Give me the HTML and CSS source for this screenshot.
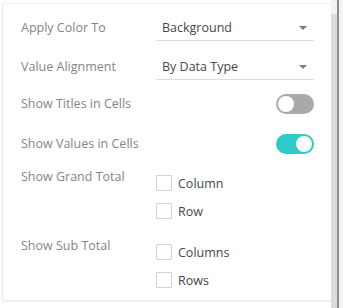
FILE: index.html
```html
<!DOCTYPE html>
<html lang="en">

<head>
  <meta charset="utf-8">
  <title>Pivot Settings</title>
  <link rel="stylesheet" href="styles.css">
</head>

<body>
  <div class="frame">
    <div class="panel">
      <div class="row select-row">
        <span class="label">Apply Color To</span>
        <div class="select">
          <span>Background</span>
          <span class="caret"></span>
        </div>
      </div>

      <div class="row select-row second">
        <span class="label">Value Alignment</span>
        <div class="select">
          <span>By Data Type</span>
          <span class="caret"></span>
        </div>
      </div>

      <div class="row toggle-row first-toggle">
        <span class="label">Show Titles in Cells</span>
        <div class="toggle-cell">
          <span class="toggle"><span class="knob"></span></span>
        </div>
      </div>

      <div class="row toggle-row">
        <span class="label">Show Values in Cells</span>
        <div class="toggle-cell">
          <span class="toggle on"><span class="knob"></span></span>
        </div>
      </div>

      <div class="row check-row grand">
        <span class="label">Show Grand Total</span>
        <div class="checks">
          <label class="check"><span class="box"></span>Column</label>
          <label class="check"><span class="box"></span>Row</label>
        </div>
      </div>

      <div class="row check-row sub">
        <span class="label">Show Sub Total</span>
        <div class="checks">
          <label class="check"><span class="box"></span>Columns</label>
          <label class="check"><span class="box"></span>Rows</label>
        </div>
      </div>
    </div>

    <div class="scrollbar">
      <div class="thumb"></div>
    </div>
    <div class="edge"></div>
    <div class="outside"></div>
  </div>
</body>

</html>
```

FILE: styles.css
```css
body,
html {
  margin: 0;
  padding: 0;
  height: 100%;
  background-color: #ffffff;
  font-family: "Open Sans", "Liberation Sans", sans-serif;
  font-size: 12.5px;
}

.frame {
  display: flex;
  height: 308px;
}

.panel {
  width: 329px;
  margin: 3px 0 0 2px;
  height: 299px;
  border-left: 1px solid #e9e9e9;
  border-top: 1px solid #f1f1f1;
  border-bottom: 2px solid #f0f0f0;
  padding: 11px 0 0 18px;
  box-sizing: border-box;
}

.row {
  display: grid;
  grid-template-columns: 135px 158px;
}

.label {
  color: #858585;
  line-height: 18px;
}

.select-row {
  align-items: center;
}

.select-row.second {
  margin-top: 13px;
}

.select {
  display: flex;
  align-items: center;
  justify-content: space-between;
  height: 25px;
  padding: 0 7px 0 6px;
  border-bottom: 1px solid #dedede;
  color: #474747;
}

.caret {
  width: 0;
  height: 0;
  border-left: 4px solid transparent;
  border-right: 4px solid transparent;
  border-top: 4px solid #7a7a7a;
}

.toggle-row {
  align-items: center;
  height: 30px;
  margin-top: 10px;
}

.toggle-row.first-toggle {
  margin-top: 9px;
}

.toggle-cell {
  display: flex;
  justify-content: flex-end;
}

.toggle {
  display: flex;
  align-items: center;
  width: 38px;
  height: 20px;
  padding: 0 2px;
  box-sizing: border-box;
  border-radius: 10px;
  background-color: #a9a9a9;
}

.toggle.on {
  justify-content: flex-end;
  background-color: #2ecac7;
}

.knob {
  width: 16px;
  height: 16px;
  border-radius: 50%;
  background-color: #ffffff;
}

.check-row {
  align-items: start;
}

.check-row.grand {
  margin-top: 9px;
}

.check-row.sub {
  margin-top: 15px;
}

.checks {
  display: flex;
  flex-direction: column;
  gap: 6px;
  padding-top: 4px;
}

.check {
  display: flex;
  align-items: center;
  gap: 6px;
  height: 22px;
  color: #474747;
}

.box {
  width: 14px;
  height: 14px;
  border: 1px solid #d3d3d3;
  border-radius: 1px;
}

.scrollbar {
  width: 6px;
  background-color: #f3f3f3;
  padding-top: 14px;
  box-sizing: border-box;
}

.thumb {
  height: 100%;
  background-color: #dcdcdc;
}

.edge {
  width: 2px;
  background-color: #8c8c8c;
}

.outside {
  flex: 1;
  background-color: #f4f4f4;
}
```
